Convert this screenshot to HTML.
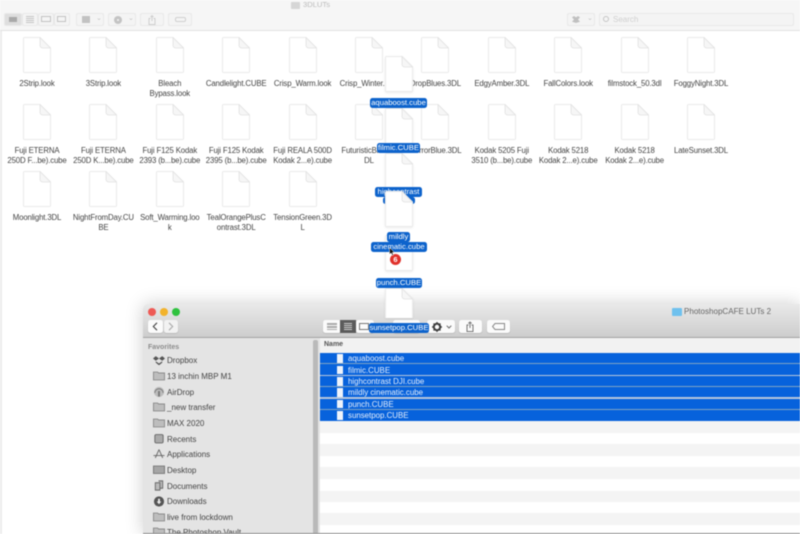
<!DOCTYPE html>
<html><head><meta charset="utf-8">
<style>
html,body{margin:0;padding:0;width:800px;height:534px;overflow:hidden;background:#fff}
#r{position:relative;width:800px;height:534px;overflow:hidden;font-family:"Liberation Sans",sans-serif;filter:blur(.45px);background:#fff}
#r div,#r svg{position:absolute}
.f{width:66px;height:60px}
.f svg{left:19px;top:0}
.f p{position:absolute;left:-2px;width:70px;top:42.2px;margin:0;text-align:center;font-size:7.8px;letter-spacing:-.14px;line-height:9.9px;color:#444}
.b{background:#f4f4f4;border:1px solid #e8e8e8;border-radius:2px;box-sizing:border-box}
.d{left:385px;width:28px;height:36px;filter:drop-shadow(0 1px 1px rgba(0,0,0,.08))}
.t{background:#0d63cc;color:#fff;font-size:7.7px;line-height:10px;text-align:center;border-radius:2.5px;white-space:nowrap}
.w{background:#fbfbfb;border-radius:2.5px;box-sizing:border-box;box-shadow:0 .5px 1px rgba(0,0,0,.2)}
.s{left:167px;font-size:8px;line-height:10px;color:#444;white-space:nowrap;margin-top:.7px}
.sel{left:320px;width:480px;height:10.2px;background:#0762dc}
.sep{left:320px;width:480px;height:1.2px;background:#7fa3c4}
.n{left:348px;font-size:7.9px;line-height:10px;color:#e6effc;white-space:nowrap;margin-top:.4px}
.g{left:320px;width:480px;background:#f4f4f4}
.i{left:153px;width:12px;height:9.5px}
</style></head><body>
<div id="r">
<svg width="0" height="0" style="position:absolute"><defs>
<symbol id="fi" viewBox="0 0 28 36"><path d="M.5 1.5Q.5.5 1.5.5H17L27.5 11V34.500Q27.500 35.500 26.500 35.500H1.500Q.5 35.500.5 34.500Z" fill="#fff" stroke="#ebebeb"/><path d="M17 .5V8Q17 11 20 11H27.500Z" fill="#f6f6f6" stroke="#e2e2e2" stroke-width=".8"/></symbol>
</defs></svg>

<!-- top window toolbar -->
<div style="left:0;top:0;width:800px;height:31px;background:#f6f6f6;border-bottom:1px solid #e2e2e2;box-sizing:border-box"></div>
<div style="left:0;top:31px;width:1.5px;height:503px;background:#ececec"></div>
<div style="left:291px;top:2px;width:9px;height:7px;background:#d6d6d6;border-radius:1px"></div>
<div style="left:303px;top:0;font-size:7.6px;line-height:10px;color:#bbb">3DLUTs</div>
<div class="b" style="left:4px;top:13px;width:18px;height:13px;background:#dedede"></div>
<div style="left:9px;top:17px;width:8px;height:5px;background:#a9a9a9"></div>
<div class="b" style="left:22px;top:13px;width:16px;height:13px"></div>
<div style="left:26px;top:16px;width:8px;height:7px;background:repeating-linear-gradient(#c5c5c5 0 1px,#f3f3f3 1px 2px)"></div>
<div class="b" style="left:38px;top:13px;width:16px;height:13px"></div>
<div style="left:41px;top:16px;width:10px;height:6px;border:1px solid #c2c2c2;box-sizing:border-box"></div>
<div class="b" style="left:54px;top:13px;width:16px;height:13px"></div>
<div style="left:57px;top:16px;width:9px;height:6px;border:1px solid #c2c2c2;box-sizing:border-box"></div>
<div class="b" style="left:76px;top:13px;width:28px;height:13px"></div>
<div style="left:82px;top:16px;width:8px;height:7px;background:#c2c2c2"></div>
<div style="left:96px;top:15px;font-size:7px;line-height:8px;color:#c5c5c5">&#8964;</div>
<div class="b" style="left:108px;top:13px;width:28px;height:13px"></div>
<div style="left:114px;top:16px;width:8px;height:8px;border-radius:50%;background:#c4c4c4"></div>
<div style="left:117px;top:19px;width:2px;height:2px;border-radius:50%;background:#f3f3f3"></div>
<div style="left:128px;top:15px;font-size:7px;line-height:8px;color:#c5c5c5">&#8964;</div>
<div class="b" style="left:140px;top:13px;width:24px;height:13px"></div>
<svg style="left:148px;top:15px" width="8" height="10" viewBox="0 0 8 10"><path d="M4 6V.7M2.500 2 4 .7 5.500 2M2.500 3.500H1V9.500H7V3.500H5.500" fill="none" stroke="#cfcfcf"/></svg>
<div class="b" style="left:168px;top:13px;width:24px;height:13px"></div>
<div style="left:175px;top:17px;width:11px;height:5px;border:1px solid #d0d0d0;border-radius:2px;box-sizing:border-box"></div>
<div class="b" style="left:567px;top:13px;width:28px;height:13px"></div>
<div style="left:572px;top:16px;width:8px;height:7px;background:#c0c0c0;clip-path:polygon(0 20%,25% 0,50% 20%,75% 0,100% 20%,75% 50%,100% 80%,50% 100%,0 80%,25% 50%)"></div>
<div style="left:587px;top:15px;font-size:7px;line-height:8px;color:#c5c5c5">&#8964;</div>
<div class="b" style="left:599px;top:13px;width:195px;height:13px"></div>
<div style="left:603px;top:16px;width:6px;height:6px;border:1px solid #c5c5c5;border-radius:50%;box-sizing:border-box"></div>
<div style="left:613px;top:15px;font-size:8px;line-height:10px;color:#d0d0d0">Search</div>

<!-- file grid -->
<div class="f" style="left:4px;top:37px"><svg width="28" height="36"><use href="#fi"/></svg><p>2Strip.look</p></div>
<div class="f" style="left:70.4px;top:37px"><svg width="28" height="36"><use href="#fi"/></svg><p>3Strip.look</p></div>
<div class="f" style="left:136.8px;top:37px"><svg width="28" height="36"><use href="#fi"/></svg><p>Bleach<br>Bypass.look</p></div>
<div class="f" style="left:203.2px;top:37px"><svg width="28" height="36"><use href="#fi"/></svg><p>Candlelight.CUBE</p></div>
<div class="f" style="left:269.6px;top:37px"><svg width="28" height="36"><use href="#fi"/></svg><p>Crisp_Warm.look</p></div>
<div class="f" style="left:336px;top:37px"><svg width="28" height="36"><use href="#fi"/></svg><p>Crisp_Winter.look</p></div>
<div class="f" style="left:402.4px;top:37px"><svg width="28" height="36"><use href="#fi"/></svg><p>DropBlues.3DL</p></div>
<div class="f" style="left:468.8px;top:37px"><svg width="28" height="36"><use href="#fi"/></svg><p>EdgyAmber.3DL</p></div>
<div class="f" style="left:535.2px;top:37px"><svg width="28" height="36"><use href="#fi"/></svg><p>FallColors.look</p></div>
<div class="f" style="left:601.6px;top:37px"><svg width="28" height="36"><use href="#fi"/></svg><p>filmstock_50.3dl</p></div>
<div class="f" style="left:668px;top:37px"><svg width="28" height="36"><use href="#fi"/></svg><p>FoggyNight.3DL</p></div>

<div class="f" style="left:4px;top:104px"><svg width="28" height="36"><use href="#fi"/></svg><p>Fuji ETERNA<br>250D F...be).cube</p></div>
<div class="f" style="left:70.4px;top:104px"><svg width="28" height="36"><use href="#fi"/></svg><p>Fuji ETERNA<br>250D K...be).cube</p></div>
<div class="f" style="left:136.8px;top:104px"><svg width="28" height="36"><use href="#fi"/></svg><p>Fuji F125 Kodak<br>2393 (b...be).cube</p></div>
<div class="f" style="left:203.2px;top:104px"><svg width="28" height="36"><use href="#fi"/></svg><p>Fuji F125 Kodak<br>2395 (b...be).cube</p></div>
<div class="f" style="left:269.6px;top:104px"><svg width="28" height="36"><use href="#fi"/></svg><p>Fuji REALA 500D<br>Kodak 2...e).cube</p></div>
<div class="f" style="left:336px;top:104px"><svg width="28" height="36"><use href="#fi"/></svg><p>FuturisticBleak.3<br>DL</p></div>
<div class="f" style="left:402.4px;top:104px"><svg width="28" height="36"><use href="#fi"/></svg><p>HorrorBlue.3DL</p></div>
<div class="f" style="left:468.8px;top:104px"><svg width="28" height="36"><use href="#fi"/></svg><p>Kodak 5205 Fuji<br>3510 (b...be).cube</p></div>
<div class="f" style="left:535.2px;top:104px"><svg width="28" height="36"><use href="#fi"/></svg><p>Kodak 5218<br>Kodak 2...e).cube</p></div>
<div class="f" style="left:601.6px;top:104px"><svg width="28" height="36"><use href="#fi"/></svg><p>Kodak 5218<br>Kodak 2...e).cube</p></div>
<div class="f" style="left:668px;top:104px"><svg width="28" height="36"><use href="#fi"/></svg><p>LateSunset.3DL</p></div>

<div class="f" style="left:4px;top:171px"><svg width="28" height="36"><use href="#fi"/></svg><p>Moonlight.3DL</p></div>
<div class="f" style="left:70.4px;top:171px"><svg width="28" height="36"><use href="#fi"/></svg><p>NightFromDay.CU<br>BE</p></div>
<div class="f" style="left:136.8px;top:171px"><svg width="28" height="36"><use href="#fi"/></svg><p>Soft_Warming.loo<br>k</p></div>
<div class="f" style="left:203.2px;top:171px"><svg width="28" height="36"><use href="#fi"/></svg><p>TealOrangePlusC<br>ontrast.3DL</p></div>
<div class="f" style="left:269.6px;top:171px"><svg width="28" height="36"><use href="#fi"/></svg><p>TensionGreen.3D<br>L</p></div>

<!-- lower window -->
<div style="left:143px;top:304px;width:657px;height:230px;background:#fff;border-radius:5px 0 0 0;box-shadow:0 0 18px rgba(0,0,0,.2)"></div>
<div style="left:143px;top:304px;width:657px;height:34px;background:linear-gradient(#e9e9e9,#cdcdcd);border-bottom:1px solid #a4a4a4;box-sizing:border-box;border-radius:5px 0 0 0"></div>
<div style="left:147.500px;top:307.500px;width:8px;height:8px;border-radius:50%;background:#ee5a55"></div>
<div style="left:159.500px;top:307.500px;width:8px;height:8px;border-radius:50%;background:#f2b32c"></div>
<div style="left:171.500px;top:307.500px;width:8px;height:8px;border-radius:50%;background:#2fc23f"></div>
<div class="w" style="left:148px;top:320px;width:14.500px;height:13px"></div>
<svg style="left:152px;top:322px" width="6" height="9" viewBox="0 0 6 9"><path d="M5 .8 1.300 4.500 5 8.200" fill="none" stroke="#444" stroke-width="1.100"/></svg>
<div class="w" style="left:163.500px;top:320px;width:14.500px;height:13px;background:#f2f2f2"></div>
<svg style="left:168px;top:322px" width="6" height="9" viewBox="0 0 6 9"><path d="M1 .8 4.700 4.500 1 8.200" fill="none" stroke="#aaa" stroke-width="1.100"/></svg>
<div style="left:672px;top:308px;width:10px;height:8px;background:#6fc1ee;border-radius:1px"></div>
<div style="left:684px;top:307px;font-size:8px;letter-spacing:.02px;line-height:10px;color:#666;white-space:nowrap">PhotoshopCAFE LUTs 2</div>

<div class="w" style="left:323px;top:320px;width:18px;height:13px"></div>
<div style="left:327px;top:323px;width:10px;height:7px;background:repeating-linear-gradient(#aaa 0 2px,#fbfbfb 2px 3px)"></div>
<div style="left:340px;top:320px;width:16px;height:13px;background:#5b5b5b"></div>
<div style="left:344px;top:323px;width:8px;height:7px;background:repeating-linear-gradient(#ccc 0 1px,#5b5b5b 1px 2px)"></div>
<div class="w" style="left:356px;top:320px;width:18px;height:13px"></div>
<div style="left:359px;top:323px;width:10px;height:7px;border:1px solid #777;box-sizing:border-box"></div>
<div class="w" style="left:393px;top:320px;width:27px;height:13px"></div>
<div class="w" style="left:427px;top:320px;width:28px;height:13px"></div>
<svg style="left:431.500px;top:322px" width="10" height="10" viewBox="0 0 10 10"><circle cx="5" cy="5" r="3.200" fill="none" stroke="#3d3d3d" stroke-width="2"/><path d="M5 0V2M5 8V10M0 5H2M8 5H10M1.500 1.500 3 3M7 7 8.500 8.500M8.500 1.500 7 3M3 7 1.500 8.500" stroke="#3d3d3d" stroke-width="1.200"/></svg>
<svg style="left:446px;top:325px" width="6" height="4" viewBox="0 0 6 4"><path d="M.7.7 3 3 5.300.7" fill="none" stroke="#666"/></svg>
<div class="w" style="left:459px;top:320px;width:23px;height:13px"></div>
<svg style="left:466px;top:321px" width="8" height="11" viewBox="0 0 8 11"><path d="M4 7V1M2.300 2.500 4 1 5.700 2.500M2.500 4H1V10.500H7V4H5.500" fill="none" stroke="#777"/></svg>
<div class="w" style="left:487px;top:320px;width:23px;height:13px"></div>
<svg style="left:492px;top:323px" width="13" height="7" viewBox="0 0 13 7"><path d="M3 .5H12.500V6.500H3L.5 3.500Z" fill="none" stroke="#888"/></svg>

<!-- sidebar -->
<div style="left:143px;top:338px;width:177px;height:196px;background:#e4e4e4"></div>
<div style="left:313px;top:340px;width:5px;height:194px;background:#b9b9b9;border-radius:2px"></div>
<div style="left:148px;top:343px;font-size:7px;line-height:10px;font-weight:bold;color:#8c8c8c">Favorites</div>
<svg class="i" style="top:355.500px" viewBox="0 0 13 10"><path d="M3 0 6.500 2.500 3 5 0 2.500ZM10 0 13 2.500 10 5 6.500 2.500ZM3 5.500 6.500 8 10 5.500 10 7 6.500 10 3 7Z" fill="#555"/></svg>
<div class="s" style="top:355px">Dropbox</div>
<svg class="i" style="top:371px" viewBox="0 0 13 10"><path d="M.5 1H5L6 2H12.500V9.500H.5Z" fill="#bdbdbd" stroke="#8a8a8a"/></svg>
<div class="s" style="top:371px">13 inchin MBP M1</div>
<svg class="i" style="top:386px;height:11px" viewBox="0 0 13 11"><circle cx="6.500" cy="6" r="5.500" fill="#bcbcbc"/><path d="M6.500 11V5" stroke="#777" stroke-width="2"/><path d="M2 7A4.500 4.500 0 0 1 11 7" fill="none" stroke="#777"/></svg>
<div class="s" style="top:387px">AirDrop</div>
<svg class="i" style="top:402px" viewBox="0 0 13 10"><path d="M.5 1H5L6 2H12.500V9.500H.5Z" fill="#bdbdbd" stroke="#8a8a8a"/></svg>
<div class="s" style="top:402.500px">_new transfer</div>
<svg class="i" style="top:418px" viewBox="0 0 13 10"><path d="M.5 1H5L6 2H12.500V9.500H.5Z" fill="#bdbdbd" stroke="#8a8a8a"/></svg>
<div class="s" style="top:418px">MAX 2020</div>
<svg class="i" style="top:434px" viewBox="0 0 13 10"><rect x="2" y=".5" width="9" height="9" rx="1.500" fill="#aaa" stroke="#666"/></svg>
<div class="s" style="top:434px">Recents</div>
<svg class="i" style="top:449px" viewBox="0 0 13 10"><path d="M6.500.5 2.500 9.500M6.500.5 10.500 9.500M.5 7H12.500" stroke="#666" fill="none"/></svg>
<div class="s" style="top:449.500px">Applications</div>
<svg class="i" style="top:465px" viewBox="0 0 13 10"><rect x=".5" y="1" width="12" height="8" fill="#a5a5a5" stroke="#777"/></svg>
<div class="s" style="top:465px">Desktop</div>
<svg class="i" style="top:480px;height:11px" viewBox="0 0 13 11"><path d="M2.500 2.500H7.500V10.500H2.500ZM6 .5H10.500V8.500H7.500" fill="#bbb" stroke="#666"/></svg>
<div class="s" style="top:481px">Documents</div>
<svg class="i" style="top:496px;height:11px" viewBox="0 0 13 11"><circle cx="6.500" cy="5.500" r="5.500" fill="#555"/><path d="M5.500 2.500H7.500V5.500H9L6.500 8.500 4 5.500H5.500Z" fill="#eee"/></svg>
<div class="s" style="top:496.500px">Downloads</div>
<svg class="i" style="top:512px" viewBox="0 0 13 10"><path d="M.5 1H5L6 2H12.500V9.500H.5Z" fill="#bdbdbd" stroke="#8a8a8a"/></svg>
<div class="s" style="top:512px">live from lockdown</div>
<svg class="i" style="top:527px" viewBox="0 0 13 10"><path d="M.5 1H5L6 2H12.500V9.500H.5Z" fill="#bdbdbd" stroke="#8a8a8a"/></svg>
<div class="s" style="top:527px">The Photoshop Vault</div>

<!-- list -->
<div style="left:320px;top:338px;width:480px;height:15px;background:#f2f2f2"></div>
<div style="left:324px;top:340px;font-size:7px;line-height:10px;font-weight:bold;color:#555">Name</div>
<div class="g" style="top:421px;height:12px"></div>
<div class="g" style="top:444px;height:12px"></div>
<div class="g" style="top:467px;height:12px"></div>
<div class="g" style="top:491px;height:11px"></div>
<div class="g" style="top:513px;height:12px"></div>
<div style="left:143px;top:533px;width:657px;height:1px;background:#8a8a8a"></div>

<div class="sel" style="top:353px"></div><div class="sep" style="top:363.200px"></div>
<div class="sel" style="top:364.400px"></div><div class="sep" style="top:374.600px;background:#b8c8dc"></div>
<div class="sel" style="top:375.800px"></div><div class="sep" style="top:386px"></div>
<div class="sel" style="top:387.200px"></div><div class="sep" style="top:397.400px;background:#b8c8dc"></div>
<div class="sel" style="top:398.600px"></div><div class="sep" style="top:408.800px"></div>
<div class="sel" style="top:410px;height:11px"></div>
<div style="left:337px;top:354px;width:6px;height:8.500px;background:#eef3fb"></div>
<div style="left:337px;top:365.500px;width:6px;height:8.500px;background:#eef3fb"></div>
<div style="left:337px;top:377px;width:6px;height:8.500px;background:#eef3fb"></div>
<div style="left:337px;top:388.400px;width:6px;height:8.500px;background:#eef3fb"></div>
<div style="left:337px;top:399.800px;width:6px;height:8.500px;background:#eef3fb"></div>
<div style="left:337px;top:411.300px;width:6px;height:8.500px;background:#eef3fb"></div>
<div class="n" style="top:354px">aquaboost.cube</div>
<div class="n" style="top:365.200px">filmic.CUBE</div>
<div class="n" style="top:376.700px">highcontrast DJI.cube</div>
<div class="n" style="top:388px">mildly cinematic.cube</div>
<div class="n" style="top:399.500px">punch.CUBE</div>
<div class="n" style="top:411px">sunsetpop.CUBE</div>

<!-- drag stack -->
<svg class="d" style="top:56px" viewBox="0 0 28 36"><use href="#fi"/></svg>
<div class="t" style="left:370px;top:97.500px;width:57px;height:10px">aquaboost.cube</div>
<svg class="d" style="top:108px" viewBox="0 0 28 36"><use href="#fi"/></svg>
<div class="t" style="left:377px;top:143px;width:43px;height:10px">filmic.CUBE</div>
<svg class="d" style="top:153px" viewBox="0 0 28 36"><use href="#fi"/></svg>
<div class="t" style="left:375px;top:187px;width:47px;height:10px">highcontrast</div>
<div class="t" style="left:383px;top:197px;width:32px;height:7px"></div>
<svg class="d" style="top:191px" viewBox="0 0 28 36"><use href="#fi"/></svg>
<svg class="d" style="top:235px" viewBox="0 0 28 36"><use href="#fi"/></svg>
<div class="t" style="left:387px;top:232px;width:23px;height:10px">mildly</div>
<div class="t" style="left:371px;top:242px;width:56px;height:10px">cinematic.cube</div>
<div style="left:390px;top:253.500px;width:11px;height:11px;border-radius:50%;background:#e0322c;color:#fff;font-size:7.500px;line-height:11px;text-align:center;font-weight:bold">6</div>
<svg style="left:389px;top:247px" width="6" height="9" viewBox="0 0 6 9"><path d="M.5.500V7.500L2 6 3.500 8.500 4.500 8 3.300 5.500H5.500Z" fill="#111" stroke="#fff" stroke-width=".5"/></svg>
<div class="t" style="left:376px;top:278px;width:46px;height:10px">punch.CUBE</div>
<svg class="d" style="top:288px;height:30px" viewBox="0 0 28 30"><use href="#fi" width="28" height="36"/></svg>
<div class="t" style="left:369px;top:323px;width:60px;height:10px">sunsetpop.CUBE</div>
</div>
</body></html>
